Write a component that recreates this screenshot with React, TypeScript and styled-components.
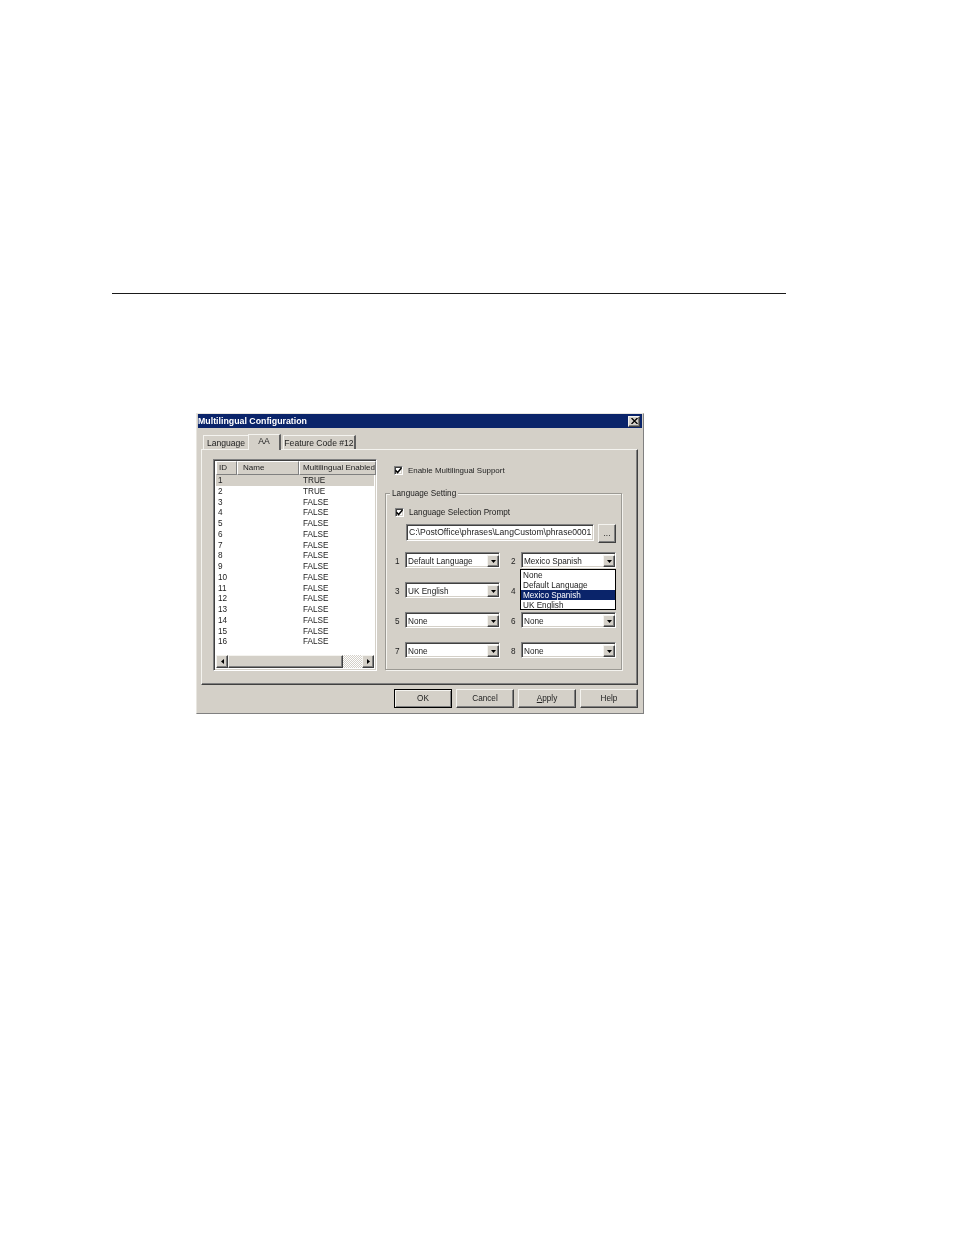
import React from 'react'
import styled, { createGlobalStyle } from 'styled-components'

const GlobalStyle = createGlobalStyle`
  html, body {
    margin: 0;
    padding: 0;
    background: #fff;
  }
  * {
    box-sizing: border-box;
  }
`

const face = '#d4d0c8'
const navy = '#0a246a'

const raised = `
  border: 1px solid;
  border-color: #f4f3ef #404040 #404040 #f4f3ef;
  box-shadow: inset -1px -1px 0 #808080;
`
const sunken = `
  border: 1px solid;
  border-color: #808080 #fff #fff #808080;
  box-shadow: inset 1px 1px 0 #404040, inset -1px -1px 0 ${face};
`

const Page = styled.div`
  width: 954px;
  height: 1235px;
  padding: 293px 0 0 112px;
  overflow: hidden;
`

const Rule = styled.div`
  width: 674px;
  height: 1px;
  background: #1a1a1a;
`

const Dialog = styled.div`
  width: 448px;
  height: 301px;
  margin: 119px 0 0 84px;
  padding: 0 1px;
  background: ${face};
  border: 1px solid;
  border-color: #e8e6e0 #808080 #808080 #e8e6e0;
  font-family: 'Liberation Sans', Arial, sans-serif;
  font-size: 8.2px;
  color: #222;
  filter: blur(0.45px);
`

const TitleBar = styled.div`
  height: 14px;
  background: ${navy};
  color: #fff;
  font-size: 8.8px;
  font-weight: 700;
  display: flex;
  align-items: center;
  justify-content: space-between;
  padding: 0 2px 0 0;
`

const CloseButton = styled.div`
  width: 12px;
  height: 11px;
  background: ${face};
  ${raised}
  display: flex;
  align-items: center;
  justify-content: center;
`

const TabRow = styled.div`
  display: flex;
  align-items: flex-end;
  height: 21px;
  padding-left: 5px;
  position: relative;
  z-index: 1;
`

const Tab = styled.div<{ $active?: boolean; $w: number; $flat?: boolean }>`
  width: ${(p) => p.$w}px;
  height: ${(p) => (p.$active ? 16 : 14)}px;
  margin-bottom: ${(p) => (p.$active ? -1 : 0)}px;
  margin-right: ${(p) => (p.$active ? 2 : 0)}px;
  background: ${face};
  border-top: 1px solid #f4f3ef;
  border-left: 1px solid #f4f3ef;
  border-right: ${(p) => (p.$flat ? 'none' : '2px solid #606060')};
  display: flex;
  align-items: center;
  justify-content: center;
  padding-bottom: ${(p) => (p.$active ? 3 : 0)}px;
  white-space: nowrap;
  font-size: 8.6px;
`

const Panel = styled.div`
  height: 236px;
  margin: 0 4px 0 3px;
  padding: 9px 15px 0 11px;
  display: flex;
  gap: 8px;
  ${raised}
`

const ListBox = styled.div`
  width: 164px;
  height: 212px;
  background: #fff;
  ${sunken}
  padding: 1px 2px 2px;
  display: flex;
  flex-direction: column;
`

const HeaderRow = styled.div`
  display: flex;
  height: 14px;
  flex: none;
`

const HeaderCell = styled.div<{ $w: number }>`
  width: ${(p) => p.$w}px;
  flex: none;
  background: ${face};
  border-right: 1px solid #808080;
  border-bottom: 1px solid #808080;
  border-top: 1px solid #fff;
  border-left: 1px solid #fff;
  padding-left: ${(p) => (p.$w > 70 ? 3 : p.$w > 30 ? 5 : 2)}px;
  line-height: 11px;
  white-space: nowrap;
  overflow: hidden;
  font-size: 8.05px;
`

const Rows = styled.div`
  flex: 1;
`

const Row = styled.div<{ $selected?: boolean }>`
  display: flex;
  height: 10.75px;
  line-height: 11px;
  background: ${(p) => (p.$selected ? face : 'transparent')};
`

const IdCell = styled.div`
  width: 87px;
  padding-left: 2px;
  flex: none;
`

const HScroll = styled.div`
  height: 13px;
  flex: none;
  display: flex;
  background: repeating-conic-gradient(#fff 0 25%, ${face} 0 50%) 0 0 / 2px 2px;
`

const ScrollButton = styled.div`
  width: 12px;
  height: 13px;
  flex: none;
  background: ${face};
  ${raised}
  display: flex;
  align-items: center;
  justify-content: center;
`

const ScrollThumb = styled(ScrollButton)`
  width: 115px;
`

const ScrollTrack = styled.div`
  flex: 1;
`

const Settings = styled.div`
  width: 237px;
  display: flex;
  flex-direction: column;
`

const CheckLine = styled.label<{ $size?: number }>`
  display: flex;
  align-items: center;
  gap: 5px;
  height: 10px;
  font-size: ${(p) => p.$size ?? 8.2}px;
`

const CheckBox = styled.span`
  width: 9px;
  height: 9px;
  background: #fff;
  ${sunken}
  display: flex;
  align-items: center;
  justify-content: center;
  flex: none;
`

const TopCheck = styled.div`
  padding: 6px 0 0 9px;
  height: 34px;
`

const GroupBox = styled.fieldset`
  position: relative;
  margin: 0;
  width: 237px;
  height: 177px;
  padding: 13px 0 0 9px;
  border: 1px solid #9c9a94;
  box-shadow: 1px 1px 0 #f4f3ef, inset 1px 1px 0 #f4f3ef;
`

const GroupTitle = styled.div`
  position: absolute;
  left: 4px;
  top: -6px;
  padding: 0 2px;
  background: ${face};
  line-height: 11px;
`

const PathRow = styled.div`
  display: flex;
  gap: 4px;
  margin: 7px 0 0 11px;
  height: 17px;
`

const PathField = styled.div`
  width: 188px;
  height: 17px;
  background: #fff;
  ${sunken}
  padding-left: 2px;
  line-height: 15px;
  white-space: nowrap;
  overflow: hidden;
  font-size: 8.6px;
`

const DotsButton = styled.div`
  width: 18px;
  height: 19px;
  background: ${face};
  ${raised}
  text-align: center;
  line-height: 18px;
`

const ComboGrid = styled.div`
  display: grid;
  grid-template-columns: 95px 95px;
  column-gap: 21px;
  row-gap: 14px;
  margin: 11px 0 0 10px;
`

const ComboCell = styled.div`
  position: relative;
  display: flex;
  height: 16px;
`

const ComboNumber = styled.span`
  position: absolute;
  left: -10px;
  top: 4px;
  line-height: 11px;
`

const Combo = styled.div`
  width: 95px;
  height: 16px;
  background: #fff;
  ${sunken}
  display: flex;
  justify-content: space-between;
  padding: 2px 0 2px 2px;
  line-height: 14px;
  white-space: nowrap;
`

const ComboArrow = styled.div`
  width: 12px;
  height: 12px;
  flex: none;
  background: ${face};
  ${raised}
  display: flex;
  align-items: center;
  justify-content: center;
`

const DropList = styled.div`
  position: absolute;
  left: -1px;
  top: 17px;
  z-index: 2;
  width: 96px;
  height: 41px;
  background: #fff;
  border: 1px solid #000;
`

const DropItem = styled.div<{ $selected?: boolean }>`
  height: 10px;
  line-height: 12px;
  padding-left: 2px;
  background: ${(p) => (p.$selected ? navy : 'transparent')};
  color: ${(p) => (p.$selected ? '#fff' : '#222')};
`

const Footer = styled.div`
  display: flex;
  justify-content: flex-end;
  gap: 4px;
  padding: 4px 4px 0 0;
`

const PushButton = styled.button<{ $default?: boolean }>`
  width: 58px;
  height: 19px;
  padding: 0;
  background: ${face};
  font: inherit;
  color: inherit;
  border: 1px solid;
  border-color: ${(p) => (p.$default ? '#000' : '#f4f3ef #404040 #404040 #f4f3ef')};
  box-shadow: ${(p) =>
    p.$default ? 'inset 1px 1px 0 #f4f3ef, inset -1px -1px 0 #808080' : 'inset -1px -1px 0 #808080'};
`

const Mnemonic = styled.span`
  text-decoration: underline;
`

const Tick = () => (
  <svg width="7" height="7" viewBox="0 0 7 7">
    <path d="M0.5 3.2 L2.6 5.5 L6.5 1" fill="none" stroke="#000" strokeWidth="1.5" />
  </svg>
)

const CloseGlyph = () => (
  <svg width="7" height="6" viewBox="0 0 7 6">
    <path d="M0.5 0 L6.5 6 M6.5 0 L0.5 6" stroke="#000" strokeWidth="1.3" />
  </svg>
)

const ArrowDown = () => (
  <svg width="5" height="3" viewBox="0 0 5 3">
    <path d="M0 0 H5 L2.5 3 Z" fill="#000" />
  </svg>
)

const ArrowSide = ({ left }: { left?: boolean }) => (
  <svg width="3" height="5" viewBox="0 0 3 5">
    <path d={left ? 'M3 0 V5 L0 2.5 Z' : 'M0 0 V5 L3 2.5 Z'} fill="#000" />
  </svg>
)

const listRows = Array.from({ length: 16 }, (_, i) => ({
  id: i + 1,
  enabled: i < 2 ? 'TRUE' : 'FALSE',
}))

const combos = [
  'Default Language',
  'Mexico Spanish',
  'UK English',
  '',
  'None',
  'None',
  'None',
  'None',
]

const dropItems = ['None', 'Default Language', 'Mexico Spanish', 'UK English']

const App = () => {
  return (
    <Page>
      <GlobalStyle />
      <Rule />
      <Dialog>
        <TitleBar>
          Multilingual Configuration
          <CloseButton>
            <CloseGlyph />
          </CloseButton>
        </TitleBar>
        <TabRow>
          <Tab $w={45} $flat>
            Language
          </Tab>
          <Tab $w={33} $active>
            AA
          </Tab>
          <Tab $w={73}>Feature Code #12</Tab>
        </TabRow>
        <Panel>
          <ListBox>
            <HeaderRow>
              <HeaderCell $w={21}>ID</HeaderCell>
              <HeaderCell $w={62}>Name</HeaderCell>
              <HeaderCell $w={77}>Multilingual Enabled</HeaderCell>
            </HeaderRow>
            <Rows>
              {listRows.map((row) => (
                <Row key={row.id} $selected={row.id === 1}>
                  <IdCell>{row.id}</IdCell>
                  <span>{row.enabled}</span>
                </Row>
              ))}
            </Rows>
            <HScroll>
              <ScrollButton>
                <ArrowSide left />
              </ScrollButton>
              <ScrollThumb />
              <ScrollTrack />
              <ScrollButton>
                <ArrowSide />
              </ScrollButton>
            </HScroll>
          </ListBox>
          <Settings>
            <TopCheck>
              <CheckLine $size={7.95}>
                <CheckBox>
                  <Tick />
                </CheckBox>
                Enable Multilingual Support
              </CheckLine>
            </TopCheck>
            <GroupBox>
              <GroupTitle>Language Setting</GroupTitle>
              <CheckLine>
                <CheckBox>
                  <Tick />
                </CheckBox>
                Language Selection Prompt
              </CheckLine>
              <PathRow>
                <PathField>C:\PostOffice\phrases\LangCustom\phrase0001</PathField>
                <DotsButton>...</DotsButton>
              </PathRow>
              <ComboGrid>
                {combos.map((label, i) => (
                  <ComboCell key={i}>
                    <ComboNumber>{i + 1}</ComboNumber>
                    <Combo>
                      {label}
                      <ComboArrow>
                        <ArrowDown />
                      </ComboArrow>
                    </Combo>
                    {i === 1 && (
                      <DropList>
                        {dropItems.map((item) => (
                          <DropItem key={item} $selected={item === 'Mexico Spanish'}>
                            {item}
                          </DropItem>
                        ))}
                      </DropList>
                    )}
                  </ComboCell>
                ))}
              </ComboGrid>
            </GroupBox>
          </Settings>
        </Panel>
        <Footer>
          <PushButton $default>OK</PushButton>
          <PushButton>Cancel</PushButton>
          <PushButton>
            <Mnemonic>A</Mnemonic>pply
          </PushButton>
          <PushButton>Help</PushButton>
        </Footer>
      </Dialog>
    </Page>
  )
}

export default App
